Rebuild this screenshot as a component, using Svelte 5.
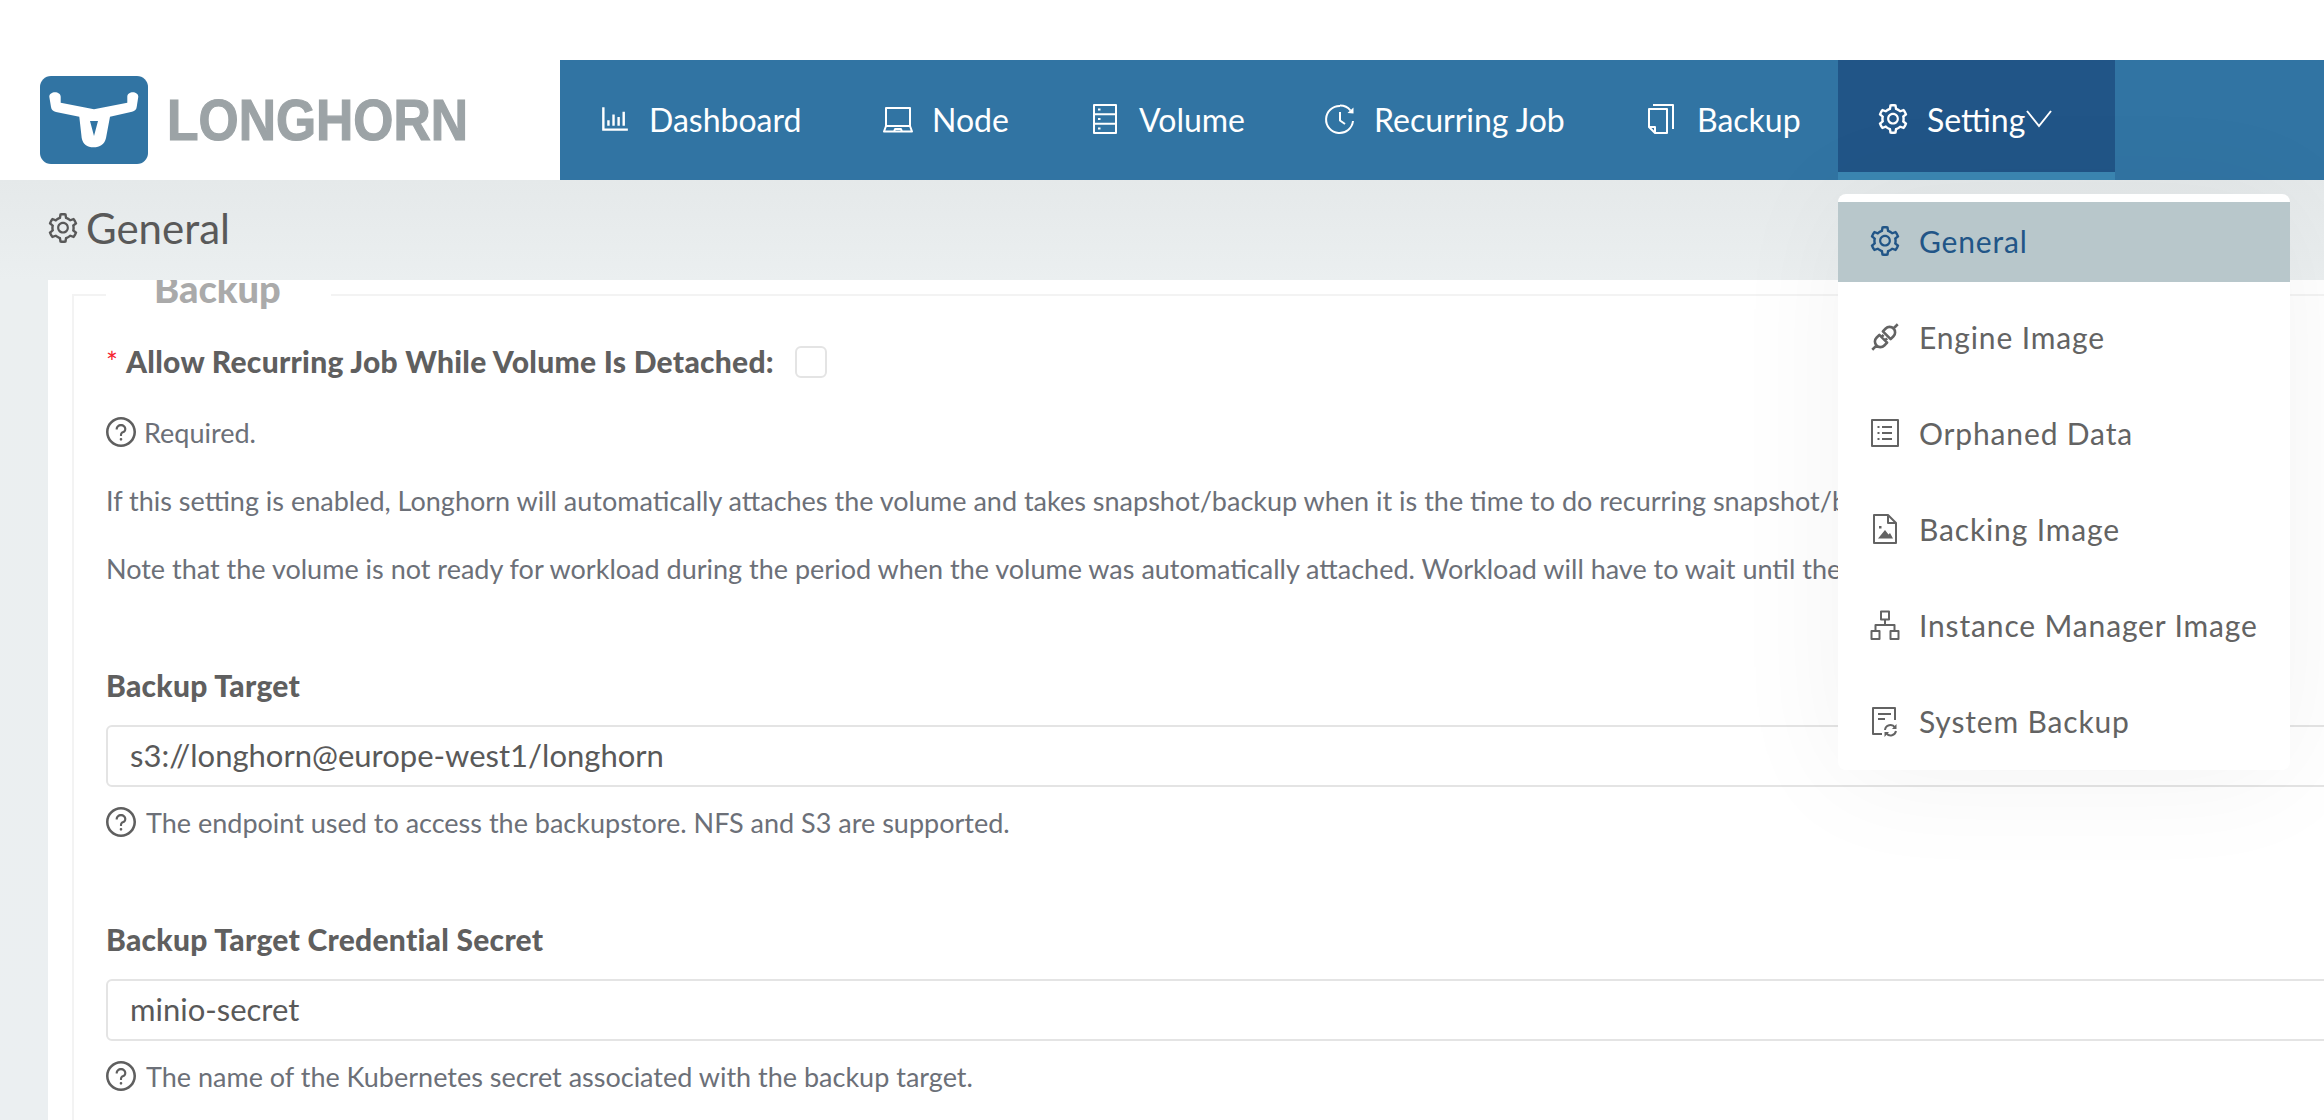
<script>
  const A = '64 64 896 896';
  const C = '0 0 30 30';
  const gearD = 'M924.8 625.7l-65.5-56c3.1-19 4.7-38.4 4.7-57.8s-1.6-38.8-4.7-57.8l65.5-56a32.03 32.03 0 0 0 9.3-35.2l-.9-2.6a443.74 443.74 0 0 0-79.7-137.9l-1.8-2.1a32.12 32.12 0 0 0-35.1-9.5l-81.3 28.9c-30-24.6-63.5-44-99.7-57.6l-15.7-85a32.05 32.05 0 0 0-25.8-25.7l-2.7-.5c-52.1-9.4-106.9-9.4-159 0l-2.7.5a32.05 32.05 0 0 0-25.8 25.7l-15.8 85.4a351.86 351.86 0 0 0-99 57.4l-81.9-29.1a32 32 0 0 0-35.1 9.5l-1.8 2.1a446.02 446.02 0 0 0-79.7 137.9l-.9 2.6c-4.5 12.5-.8 26.5 9.3 35.2l66.3 56.6c-3.1 18.8-4.6 38-4.6 57.1 0 19.2 1.5 38.4 4.6 57.1L99 625.5a32.03 32.03 0 0 0-9.3 35.2l.9 2.6c18.1 50.4 44.9 96.9 79.7 137.9l1.8 2.1a32.12 32.12 0 0 0 35.1 9.5l81.9-29.1c29.8 24.5 63.1 43.9 99 57.4l15.8 85.4a32.05 32.05 0 0 0 25.8 25.7l2.7.5a449.4 449.4 0 0 0 159 0l2.7-.5a32.05 32.05 0 0 0 25.8-25.7l15.7-85a350 350 0 0 0 99.7-57.6l81.3 28.9a32 32 0 0 0 35.1-9.5l1.8-2.1c34.8-41.1 61.6-87.5 79.7-137.9l.9-2.6c4.5-12.3.8-26.3-9.3-35zM788.3 465.9c2.5 15.1 3.8 30.6 3.8 46.1s-1.3 31-3.8 46.1l-6.6 40.1 74.7 63.9a370.03 370.03 0 0 1-42.6 73.6L721 702.8l-31.4 25.8c-23.9 19.6-50.5 35-79.3 45.8l-38.1 14.3-17.9 97a377.5 377.5 0 0 1-85 0l-17.9-97.2-37.8-14.5c-28.5-10.8-55-26.2-78.7-45.7l-31.4-25.9-93.4 33.2c-17-22.9-31.2-47.6-42.6-73.6l75.5-64.5-6.5-40c-2.4-14.9-3.7-30.3-3.7-45.5 0-15.3 1.2-30.6 3.7-45.5l6.5-40-75.5-64.5c11.3-26.1 25.6-50.7 42.6-73.6l93.4 33.2 31.4-25.9c23.7-19.5 50.2-34.9 78.7-45.7l37.9-14.3 17.9-97.2c28.1-3.2 56.8-3.2 85 0l17.9 97 38.1 14.3c28.7 10.8 55.4 26.2 79.3 45.8l31.4 25.8 92.8-32.9c17 22.9 31.2 47.6 42.6 73.6L781.8 426l6.5 39.9zM512 326c-97.2 0-176 78.8-176 176s78.8 176 176 176 176-78.8 176-176-78.8-176-176-176zm79.2 255.2A111.6 111.6 0 0 1 512 614c-29.9 0-58-11.7-79.2-32.8A111.6 111.6 0 0 1 400 502c0-29.9 11.7-58 32.8-79.2C454 401.6 482.1 390 512 390c29.9 0 58 11.6 79.2 32.8A111.6 111.6 0 0 1 624 502c0 29.9-11.7 58-32.8 79.2z';
  const fillP = (d) => `<path fill="currentColor" d="${d}"/>`;
  const ln = (d, w = 2) => `<path fill="none" stroke="currentColor" stroke-width="${w}" stroke-linejoin="round" d="${d}"/>`;
  const fl = (d) => `<path fill="currentColor" d="${d}"/>`;
  const icons = {
    gear: { vb: A, body: fillP(gearD) },
    question: {
      vb: A,
      body:
        fillP('M512 64C264.6 64 64 264.6 64 512s200.6 448 448 448 448-200.6 448-448S759.4 64 512 64zm0 820c-205.4 0-372-166.6-372-372s166.6-372 372-372 372 166.6 372 372-166.6 372-372 372z') +
        fillP('M623.6 316.7C593.6 290.4 554 276 512 276s-81.6 14.5-111.6 40.7C369.2 344 352 380.7 352 420v7.6c0 4.4 3.6 8 8 8h48c4.4 0 8-3.6 8-8V420c0-44.1 43.1-80 96-80s96 35.9 96 80c0 31.1-22 59.6-56.1 72.7-21.2 8.1-39.2 22.3-52.1 40.9-13.1 19-19.9 41.8-19.9 64.9V620c0 4.4 3.6 8 8 8h48c4.4 0 8-3.6 8-8v-22.7a48.3 48.3 0 0 1 30.9-44.8c59-22.7 97.1-74.7 97.1-132.5.1-39.3-17.1-76-48.3-103.3zM472 732a40 40 0 1 0 80 0 40 40 0 1 0-80 0z')
    },
    bar: {
      vb: A,
      body: fillP('M888 792H200V168c0-4.4-3.6-8-8-8h-56c-4.4 0-8 3.6-8 8v688c0 4.4 3.6 8 8 8h752c4.4 0 8-3.6 8-8v-56c0-4.4-3.6-8-8-8zm-600-80h56c4.4 0 8-3.6 8-8V560c0-4.4-3.6-8-8-8h-56c-4.4 0-8 3.6-8 8v144c0 4.4 3.6 8 8 8zm152 0h56c4.4 0 8-3.6 8-8V384c0-4.4-3.6-8-8-8h-56c-4.4 0-8 3.6-8 8v320c0 4.4 3.6 8 8 8zm152 0h56c4.4 0 8-3.6 8-8V462c0-4.4-3.6-8-8-8h-56c-4.4 0-8 3.6-8 8v242c0 4.4 3.6 8 8 8zm152 0h56c4.4 0 8-3.6 8-8V304c0-4.4-3.6-8-8-8h-56c-4.4 0-8 3.6-8 8v400c0 4.4 3.6 8 8 8z')
    },
    laptop: { vb: C, body: ln('M3 22V4H27V22M3 22L1 27.5H29L27 22ZM11 27.5L12 25H18L19 27.5') },
    database: {
      vb: C,
      body:
        ln('M4 1H26V29H4ZM4 10.3H26M4 19.7H26') +
        fl('M8 4.5h2.5v2H8zM8 14h2.5v2H8zM8 23.5h2.5v2H8z')
    },
    clock: {
      vb: C,
      body:
        ln('M15 2A13.5 13.5 0 1 0 28 17M15 8V16.5L20 20') +
        ln('M15 1.5C19 1.5 23 3.2 25.5 6.5') +
        fl('M28.5 3.5L28.5 9.5L22.5 9Z')
    },
    copy: { vb: C, body: ln('M1 5H19V29H7L1 23ZM1 23H7V29M5 1H25V25') },
    api: {
      vb: C,
      body:
        '<g transform="rotate(-45 15 15)">' +
        ln('M12.5 9.5V20.5H8.5a5.5 5.5 0 0 1 0-11ZM12.5 12.5H15.5M12.5 17.5H15.5M3.5 15H-3', 2.6) +
        ln('M17.5 9.5V20.5H21.5a5.5 5.5 0 0 0 0-11ZM27 15H33', 2.6) +
        '</g>'
    },
    profile: {
      vb: C,
      body:
        ln('M2 2H28V28H2Z') +
        ln('M12 9H22M12 15H22M12 21H22') +
        fl('M7.5 8h2v2h-2zM7.5 14h2v2h-2zM7.5 20h2v2h-2z')
    },
    file: {
      vb: C,
      body:
        ln('M4 1H18L26 9V29H4ZM18 1V9H26') +
        fl('M8 24.5L15 16L18.5 20.5L20 19L23 24.5Z') +
        fl('M9 12h2.5v2.5H9z')
    },
    apartment: { vb: C, body: ln('M11 1.5H19V9.5H11ZM1.5 21H9.5V29H1.5ZM20.5 21H28.5V29H20.5ZM15 9.5V15M5.5 21V15H24.5V21') },
    filesync: {
      vb: C,
      body:
        ln('M25 14V2H3V28H12M8 8H21M8 13H15') +
        ln('M15 24A5.5 5.5 0 0 1 25 21.5M26 25A5.5 5.5 0 0 1 16.5 27.5') +
        fl('M26.5 18v5h-4.5zM14.5 31v-5h4.5z')
    }
  };
  const nav = [
    { label: 'Dashboard', icon: 'bar', width: 283 },
    { label: 'Node', icon: 'laptop', width: 207 },
    { label: 'Volume', icon: 'database', width: 235 },
    { label: 'Recurring Job', icon: 'clock', width: 323 },
    { label: 'Backup', icon: 'copy', width: 230 },
    { label: 'Setting', icon: 'gear', width: 277, active: true }
  ];
  const menu = [
    { label: 'General', icon: 'gear', selected: true },
    { label: 'Engine Image', icon: 'api' },
    { label: 'Orphaned Data', icon: 'profile' },
    { label: 'Backing Image', icon: 'file' },
    { label: 'Instance Manager Image', icon: 'apartment' },
    { label: 'System Backup', icon: 'filesync' }
  ];
</script>

{#snippet icon(name, cls)}
  <svg class={cls} viewBox={icons[name].vb} aria-hidden="true">{@html icons[name].body}</svg>
{/snippet}

<div class="root">
  <header class="top">
    <div class="brand">
      <svg class="mark" viewBox="0 0 108 88" aria-hidden="true">
        <rect width="108" height="88" rx="11" fill="#3174a3" />
        <path
          fill="#fff"
          fill-rule="evenodd"
          d="M9.3 20.7C9.3 14.7 20.7 14.7 20.7 20.7L20.7 26.7L54 33.3L87.3 26.7L87.3 20.7C87.3 14.7 98.3 14.7 98.3 20.7L96.7 31C96.4 33.5 95 35 92 35.8L70 40.7L66 62C64.5 68.5 60 71.3 53.5 71.3C47 71.3 43 68.5 41.7 62L39.3 40.7L16 36C13 35.3 11.5 34 11 31ZM50 45L58 45L54 60Z"
        />
      </svg>
      <span class="wordmark">LONGHORN</span>
    </div>
    <nav class="nav">
      {#each nav as item}
        <div class="nav-item" class:active={item.active} style="width:{item.width}px">
          {@render icon(item.icon, 'nav-icon')}
          <span class="nav-label">{item.label}</span>
          {#if item.active}
            <svg class="chevron" viewBox="0 0 26 18" aria-hidden="true">
              <path d="M1 1L13 16L25 1" fill="none" stroke="currentColor" stroke-width="2" />
            </svg>
            <div class="dropdown">
              {#each menu as entry}
                <div class="menu-item" class:selected={entry.selected}>
                  {@render icon(entry.icon, 'menu-icon')}
                  <span>{entry.label}</span>
                </div>
              {/each}
            </div>
          {/if}
        </div>
      {/each}
    </nav>
  </header>

  <main class="page">
    <h1 class="title">
      {@render icon('gear', 'title-icon')}
      <span>General</span>
    </h1>
    <section class="card">
      <div class="group">
        <div class="legend">Backup</div>
        <div class="check-row">
          <span class="star">*</span>
          <strong class="label">Allow Recurring Job While Volume Is Detached:</strong>
          <span class="box"></span>
        </div>
        <div class="help first">
          {@render icon('question', 'help-icon')}
          <span>Required.</span>
        </div>
        <p class="para p1">If this setting is enabled, Longhorn will automatically attaches the volume and takes snapshot/backup when it is the time to do recurring snapshot/backup.</p>
        <p class="para p2">Note that the volume is not ready for workload during the period when the volume was automatically attached. Workload will have to wait until the recurring job finishes.</p>

        <div class="label field-label l1">Backup Target</div>
        <input class="input" readonly value="s3://longhorn@europe-west1/longhorn" />
        <div class="help under">
          {@render icon('question', 'help-icon')}
          <span>The endpoint used to access the backupstore. NFS and S3 are supported.</span>
        </div>

        <div class="label field-label l2">Backup Target Credential Secret</div>
        <input class="input" readonly value="minio-secret" />
        <div class="help under">
          {@render icon('question', 'help-icon')}
          <span>The name of the Kubernetes secret associated with the backup target.</span>
        </div>
      </div>
    </section>
  </main>
</div>

<style>
  :global(body) {
    margin: 0;
    background: #fff;
  }
  .root {
    height: 1120px;
    overflow: hidden;
    font-family: Lato, "Open Sans", sans-serif;
    color: #636363;
    display: flex;
    flex-direction: column;
  }
  .top {
    margin-top: 60px;
    height: 120px;
    flex: none;
    display: flex;
    position: relative;
    z-index: 2;
  }
  .brand {
    width: 560px;
    flex: none;
    box-sizing: border-box;
    padding: 16px 0 0 40px;
    display: flex;
    align-items: flex-start;
    background: #fff;
  }
  .mark {
    width: 108px;
    height: 88px;
    flex: none;
  }
  .wordmark {
    margin: 16px 0 0 19px;
    font-family: "Liberation Sans", sans-serif;
    font-weight: 700;
    font-size: 57px;
    line-height: 56px;
    color: #9ca3a6;
    transform: scaleX(0.905);
    transform-origin: left center;
    -webkit-text-stroke: 1.2px #9ca3a6;
  }
  .nav {
    flex: 1;
    display: flex;
    background: #3174a3;
    color: #fff;
  }
  .nav-item {
    position: relative;
    flex: none;
    box-sizing: border-box;
    padding: 0 0 2px 40px;
    display: flex;
    align-items: center;
    font-size: 32px;
  }
  .nav-item.active {
    background: #215587;
    box-shadow: inset 0 -8px 0 #3b87b2;
  }
  .nav-icon {
    width: 30px;
    height: 30px;
    flex: none;
    margin-right: 19px;
    overflow: visible;
  }
  .chevron {
    width: 26px;
    height: 18px;
    margin-left: 1px;
    flex: none;
  }
  .dropdown {
    position: absolute;
    top: 134px;
    left: 0;
    width: 452px;
    height: 576px;
    box-sizing: border-box;
    padding-top: 8px;
    background: #fff;
    border-radius: 8px;
    box-shadow: 0 6px 120px rgba(0, 0, 0, 0.05);
    color: #636363;
  }
  .menu-item {
    height: 80px;
    margin-bottom: 16px;
    box-sizing: border-box;
    padding: 0 0 2px 32px;
    display: flex;
    align-items: center;
    font-size: 30px;
    letter-spacing: 0.85px;
  }
  .menu-item.selected {
    background: #b8c7cb;
    color: #215587;
  }
  .menu-icon {
    width: 30px;
    height: 30px;
    flex: none;
    margin-right: 19px;
    overflow: visible;
  }
  .page {
    flex: 1;
    min-height: 0;
    padding-left: 48px;
    background: linear-gradient(#e5e9ea, #ebeff0 100px, #ebeff1);
  }
  .title {
    margin: 0;
    height: 100px;
    box-sizing: border-box;
    padding-bottom: 4px;
    display: flex;
    align-items: center;
    gap: 8px;
    font-weight: 400;
    font-size: 42px;
    color: #595959;
  }
  .title-icon {
    width: 30px;
    height: 30px;
    flex: none;
  }
  .card {
    width: 2700px;
    height: 840px;
    overflow: hidden;
    box-sizing: border-box;
    padding: 14px 0 0 24px;
    background: #fff;
  }
  .group {
    position: relative;
    height: 900px;
    box-sizing: border-box;
    padding: 46px 0 0 32px;
    border-top: 2px solid #f3f3f3;
    border-left: 2px solid #f3f3f3;
  }
  .legend {
    position: absolute;
    top: -31px;
    left: 32px;
    width: 225px;
    height: 33px;
    box-sizing: border-box;
    padding-left: 48px;
    background: #fff;
    font-weight: 900;
    font-size: 38px;
    line-height: 46px;
    color: #aaa;
  }
  .check-row {
    display: flex;
    align-items: center;
    height: 40px;
  }
  .check-row .label {
    margin-bottom: 2px;
  }
  .star {
    color: #f5222d;
    font-size: 28px;
    width: 20px;
    flex: none;
  }
  .label {
    font-weight: 900;
    font-size: 30px;
    letter-spacing: 0.27px;
    color: #5f5f5f;
  }
  .box {
    width: 32px;
    height: 32px;
    box-sizing: border-box;
    margin-left: 21px;
    border: 2px solid #e4e4e4;
    border-radius: 6px;
    background: #fff;
  }
  .help {
    display: flex;
    align-items: center;
    height: 40px;
    font-size: 27px;
    color: #6c7078;
    white-space: nowrap;
  }
  .help.first {
    margin-top: 30px;
    gap: 8px;
  }
  .help.under {
    margin-top: 15px;
    gap: 10px;
  }
  .help-icon {
    width: 30px;
    height: 30px;
    flex: none;
    color: #5f5f5f;
  }
  .para {
    margin: 0;
    height: 40px;
    font-size: 27px;
    line-height: 38px;
    color: #6c7078;
    white-space: nowrap;
  }
  .p1 {
    margin-top: 30px;
  }
  .p2 {
    margin-top: 28px;
  }
  .field-label {
    height: 40px;
    line-height: 36px;
  }
  .l1 {
    margin-top: 77px;
  }
  .l2 {
    margin-top: 79px;
  }
  .input {
    display: block;
    width: 2500px;
    height: 62px;
    margin-top: 18px;
    box-sizing: border-box;
    padding: 0 0 2px 22px;
    border: 2px solid #e4e4e4;
    border-radius: 6px;
    outline: none;
    background: #fff;
    font-family: inherit;
    font-size: 31px;
    color: #595959;
  }
</style>
